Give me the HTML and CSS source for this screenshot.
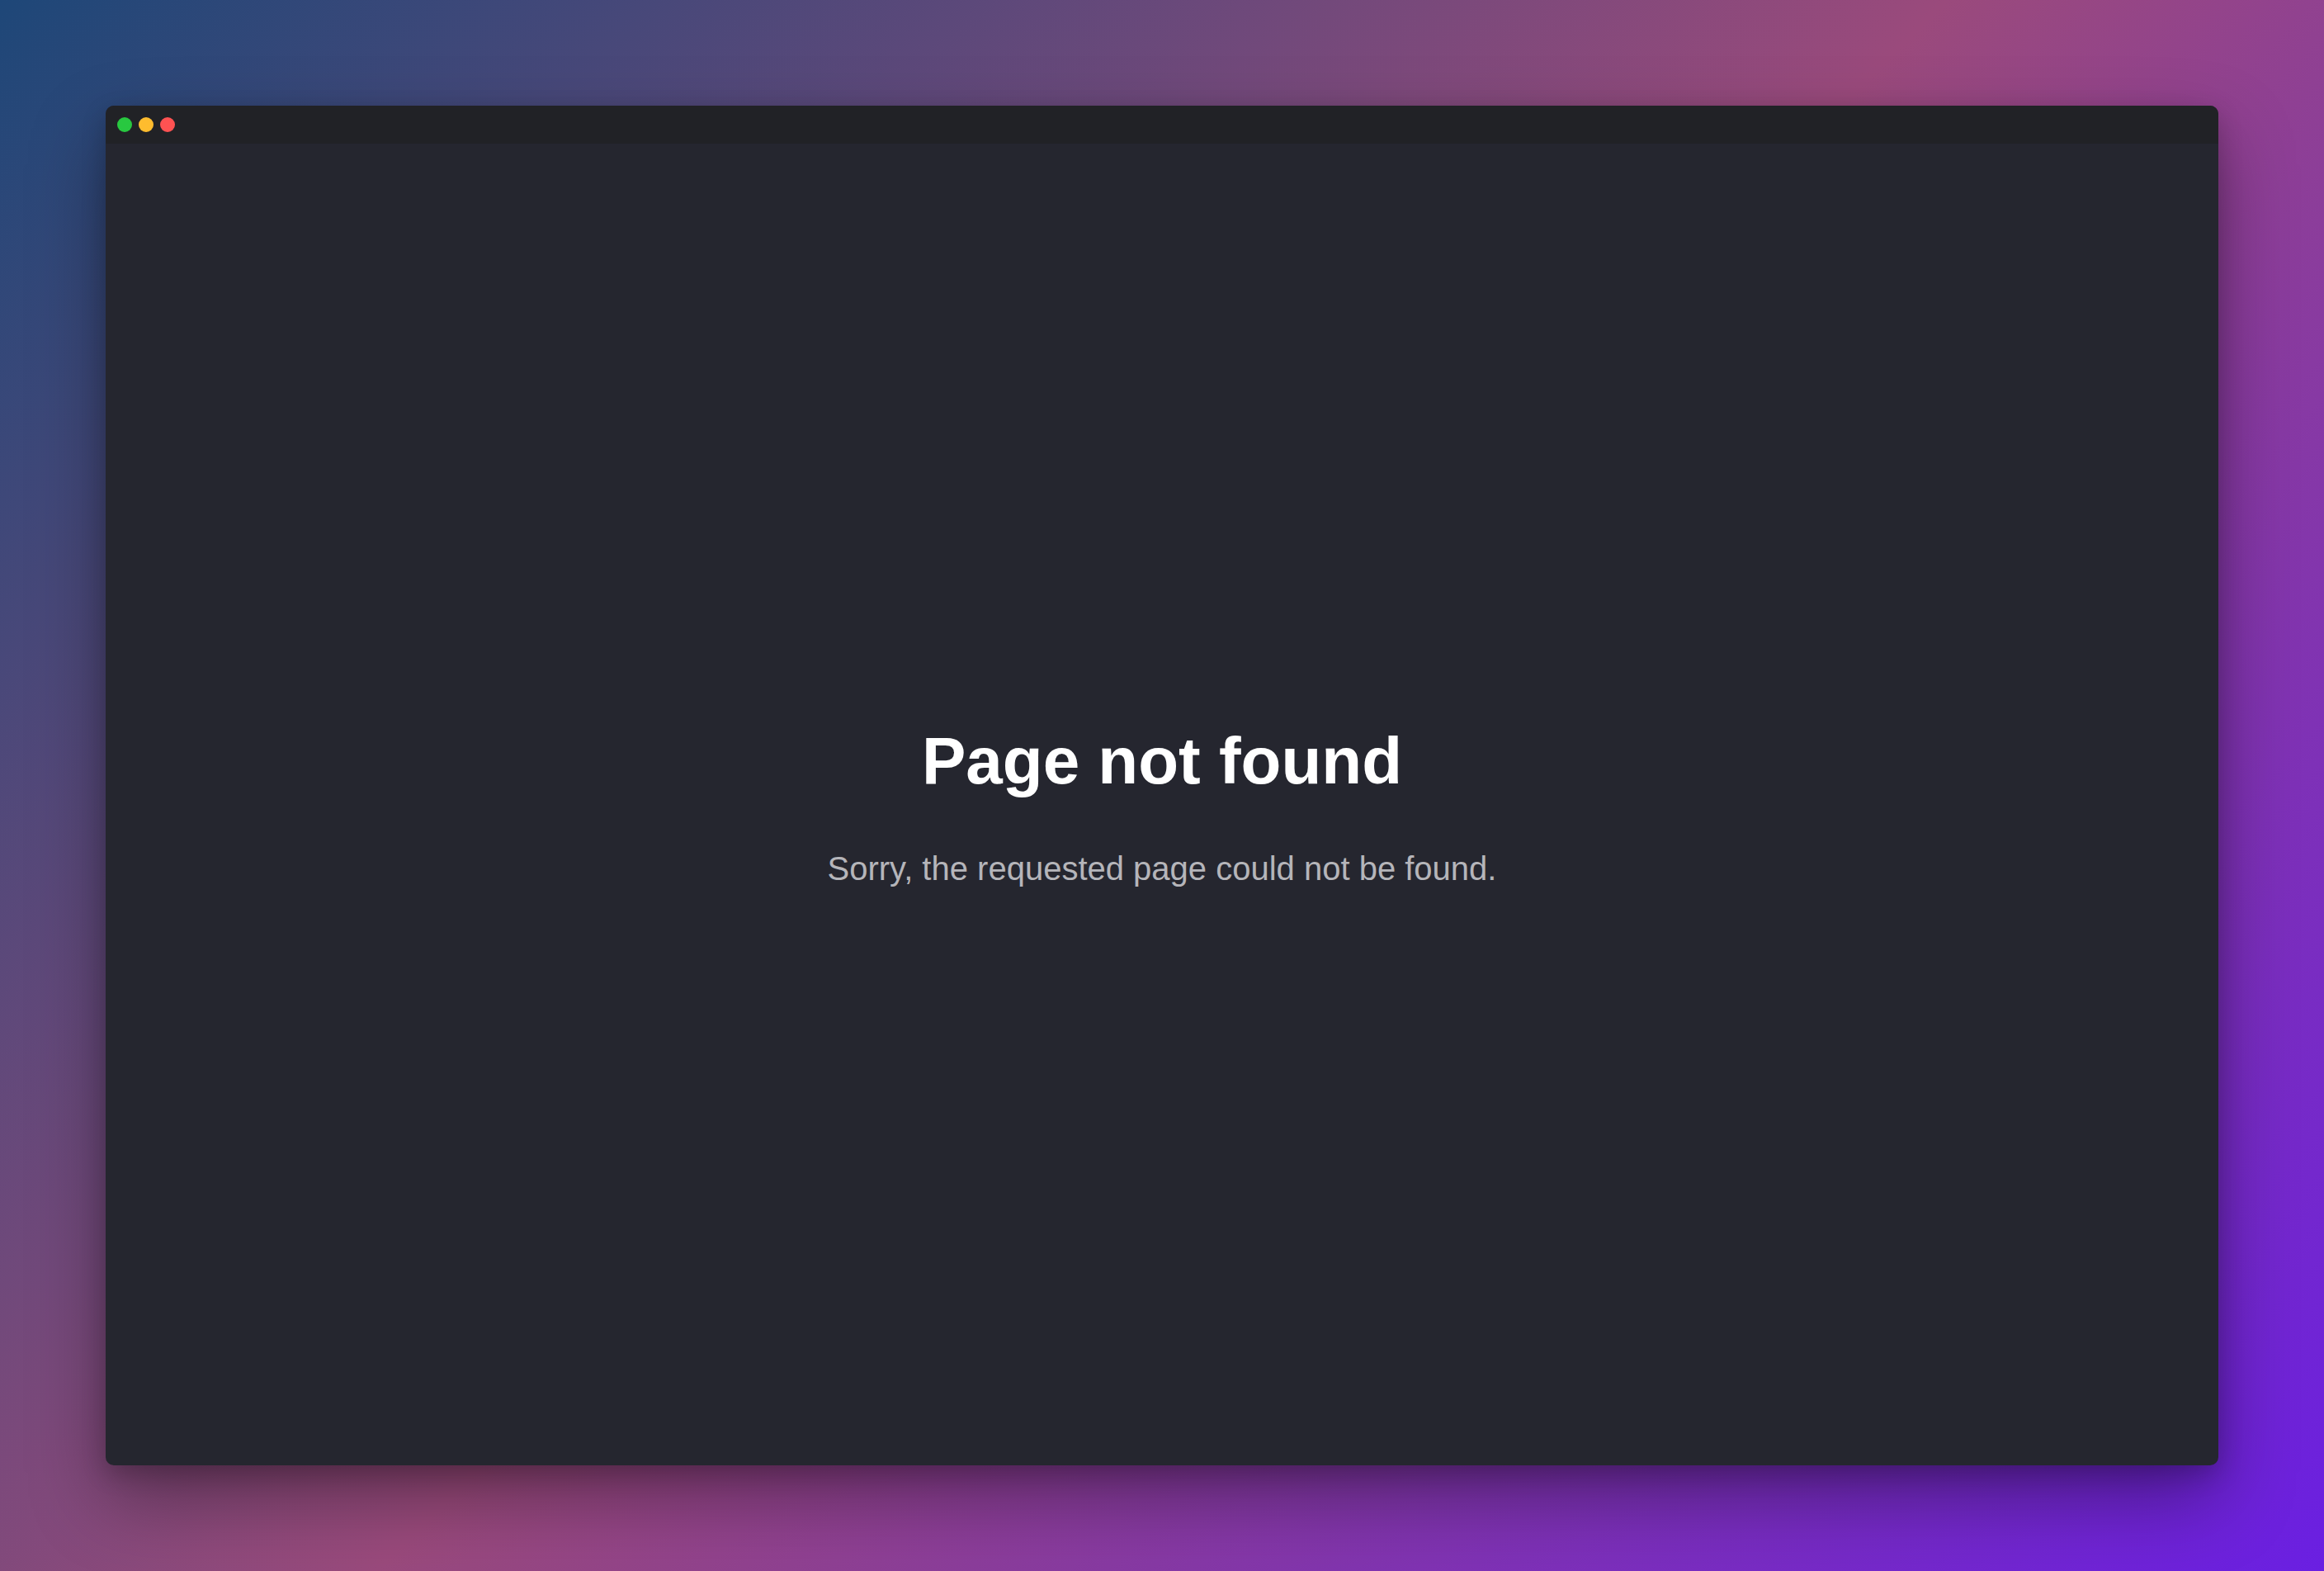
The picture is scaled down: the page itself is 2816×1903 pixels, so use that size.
FILE: index.html
```html
<!DOCTYPE html>
<html lang="en">
<head>
<meta charset="utf-8">
<title>Page not found</title>
<link rel="stylesheet" href="styles.css">
</head>
<body>
  <div class="stage">
    <div class="window">
      <div class="titlebar">
        <span class="dot dot-green"></span>
        <span class="dot dot-yellow"></span>
        <span class="dot dot-red"></span>
      </div>
      <main class="content">
        <h1 class="title">Page not found</h1>
        <p class="subtitle">Sorry, the requested page could not be found.</p>
      </main>
    </div>
  </div>
</body>
</html>
```

FILE: styles.css
```css
html, body {
  margin: 0;
  padding: 0;
  height: 100%;
}

body {
  font-family: "Liberation Sans", Arial, sans-serif;
  background: linear-gradient(135deg, #1e4778 0%, #9a4a7c 50%, #6a1fe2 100%);
  overflow: hidden;
}

.stage {
  box-sizing: border-box;
  height: 100vh;
  padding: 128px;
  display: flex;
}

.window {
  flex: 1;
  display: flex;
  flex-direction: column;
  background: #25262f;
  border-radius: 10px;
  overflow: hidden;
  box-shadow: 0 40px 90px rgba(0, 0, 0, 0.35), 0 10px 30px rgba(0, 0, 0, 0.2);
}

.titlebar {
  display: flex;
  align-items: center;
  gap: 8px;
  padding: 14px;
  background: #212226;
}

.dot {
  width: 18px;
  height: 18px;
  border-radius: 50%;
}

.dot-green { background: #28c840; }
.dot-yellow { background: #febc2e; }
.dot-red { background: #ff5252; }

.content {
  flex: 1;
  display: flex;
  flex-direction: column;
  align-items: center;
  justify-content: center;
  text-align: center;
}

.title {
  margin: 0;
  font-size: 80px;
  line-height: 96px;
  font-weight: 700;
  color: #ffffff;
}

.subtitle {
  margin: 58px 0 0;
  font-size: 40px;
  line-height: 48px;
  color: #b5b5ba;
}
```
